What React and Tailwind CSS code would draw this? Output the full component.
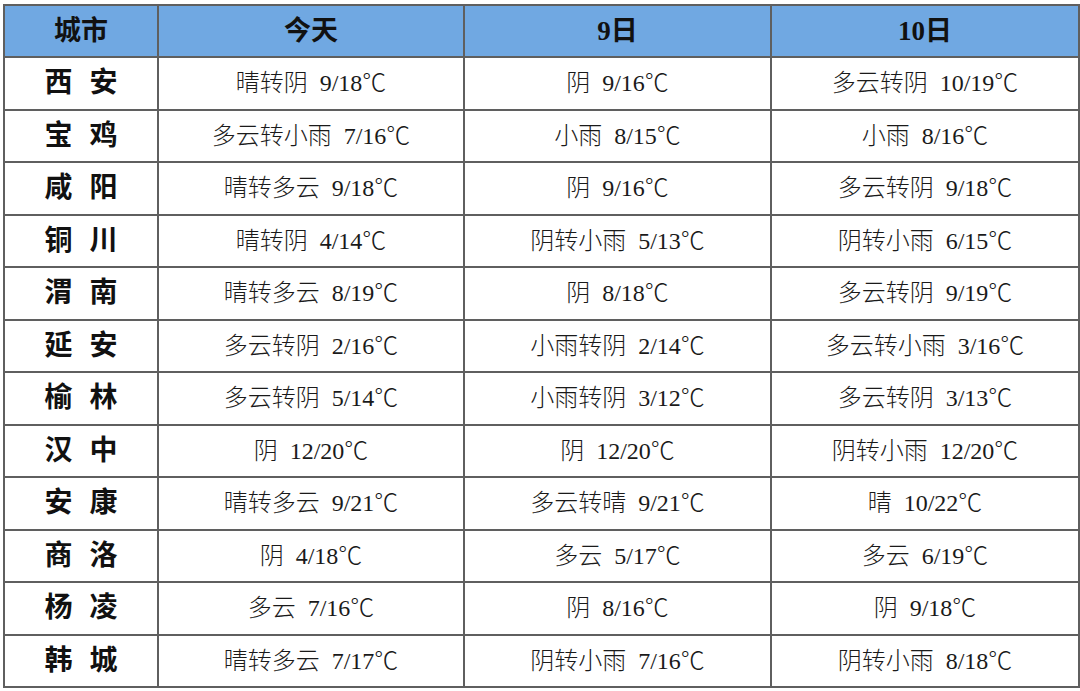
const ROWS = [
  ['西', '安', ['晴转阴', '9/18'], ['阴', '9/16'], ['多云转阴', '10/19']],
  ['宝', '鸡', ['多云转小雨', '7/16'], ['小雨', '8/15'], ['小雨', '8/16']],
  ['咸', '阳', ['晴转多云', '9/18'], ['阴', '9/16'], ['多云转阴', '9/18']],
  ['铜', '川', ['晴转阴', '4/14'], ['阴转小雨', '5/13'], ['阴转小雨', '6/15']],
  ['渭', '南', ['晴转多云', '8/19'], ['阴', '8/18'], ['多云转阴', '9/19']],
  ['延', '安', ['多云转阴', '2/16'], ['小雨转阴', '2/14'], ['多云转小雨', '3/16']],
  ['榆', '林', ['多云转阴', '5/14'], ['小雨转阴', '3/12'], ['多云转阴', '3/13']],
  ['汉', '中', ['阴', '12/20'], ['阴', '12/20'], ['阴转小雨', '12/20']],
  ['安', '康', ['晴转多云', '9/21'], ['多云转晴', '9/21'], ['晴', '10/22']],
  ['商', '洛', ['阴', '4/18'], ['多云', '5/17'], ['多云', '6/19']],
  ['杨', '凌', ['多云', '7/16'], ['阴', '8/16'], ['阴', '9/18']],
  ['韩', '城', ['晴转多云', '7/17'], ['阴转小雨', '7/16'], ['阴转小雨', '8/18']],
];

function Cell({ value }) {
  const [weather, temp] = value;
  return (
    <td className="border-2 border-[#5f5f5f] text-center text-[24px] font-light text-[#1a1a1a]">
      <span>{weather}</span>
      <span className="ml-3">{temp}℃</span>
    </td>
  );
}

export default function App() {
  return (
    <main
      className="w-[1080px] h-[691px] bg-white pt-[4px] pl-[3px]"
      style={{ fontFamily: '"Liberation Serif", "Noto Sans CJK SC", serif' }}
    >
      <table className="w-[1075px] border-collapse table-fixed">
        <colgroup>
          <col className="w-[154px]" />
          <col className="w-[306px]" />
          <col className="w-[307px]" />
          <col className="w-[308px]" />
        </colgroup>
        <thead>
          <tr className="h-[52px] bg-[#70a8e2] text-[27px] font-bold text-[#111]">
            <th className="border-2 border-[#5f5f5f]">城市</th>
            <th className="border-2 border-[#5f5f5f]">今天</th>
            <th className="border-2 border-[#5f5f5f]">9日</th>
            <th className="border-2 border-[#5f5f5f]">10日</th>
          </tr>
        </thead>
        <tbody>
          {ROWS.map(([a, b, today, d9, d10]) => (
            <tr key={a + b} className="h-[52.5px]">
              <td className="border-2 border-[#5f5f5f] text-center text-[28px] font-bold text-[#111]">
                <span>{a}</span>
                <span className="ml-[17px]">{b}</span>
              </td>
              <Cell value={today} />
              <Cell value={d9} />
              <Cell value={d10} />
            </tr>
          ))}
        </tbody>
      </table>
    </main>
  );
}
